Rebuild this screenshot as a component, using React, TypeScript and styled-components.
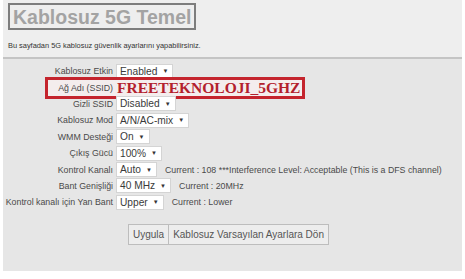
import React from "react";
import styled, { createGlobalStyle } from "styled-components";

const GlobalStyle = createGlobalStyle`
  html, body {
    margin: 0;
    padding: 0;
    background: #ffffff;
  }
  body {
    font-family: "Liberation Sans", Arial, sans-serif;
  }
`;

const Panel = styled.div`
  width: 459px;
  height: 271px;
  margin-left: 3px;
  background: #e6e6e6;
  display: flex;
  flex-direction: column;
`;

const Header = styled.div`
  background: #eeeeee;
  padding: 3px 0 0 5px;
  height: 59px;
  box-sizing: border-box;
  border-bottom: 2px solid #c4c4c4;
`;

const Title = styled.h1`
  display: inline-block;
  margin: 0;
  padding: 0 3px;
  height: 27px;
  line-height: 25px;
  box-sizing: border-box;
  border: 2px solid #7d7d7d;
  font-size: 19.5px;
  font-weight: bold;
  color: #a3a3a3;
`;

const Description = styled.p`
  margin: 11px 0 0;
  font-size: 7.4px;
  color: #333;
`;

const Form = styled.div`
  padding-top: 4px;
  display: flex;
  flex-direction: column;
`;

const Row = styled.div`
  position: relative;
  display: flex;
  align-items: center;
  height: 16.4px;
`;

const Label = styled.div`
  width: 113px;
  flex-shrink: 0;
  display: flex;
  justify-content: flex-end;
  white-space: nowrap;
  font-size: 8.8px;
  color: #4a4a4a;
  padding-right: 3px;
  box-sizing: border-box;
`;

const Select = styled.span`
  display: inline-flex;
  align-items: center;
  gap: 5px;
  height: 13px;
  padding: 0 4px 0 3px;
  background: #ffffff;
  border: 1px solid #d4d4d4;
  font-size: 10.2px;
  color: #3a3a3a;
  white-space: nowrap;
`;

const Arrow = styled.span`
  font-size: 6px;
  color: #333;
`;

const Current = styled.span`
  margin-left: 8px;
  font-size: 8.8px;
  color: #4a4a4a;
  white-space: nowrap;
`;

const Ssid = styled.span`
  font-family: "Liberation Serif", "Times New Roman", serif;
  font-weight: bold;
  font-size: 15.5px;
  color: #b3202c;
  position: relative;
  z-index: 1;
  padding-left: 1px;
`;

const Highlight = styled.div`
  position: absolute;
  left: 42px;
  top: -2px;
  width: 260px;
  height: 22px;
  border: 3px solid #c4242d;
  background: #f4eded;
  box-sizing: border-box;
`;

const HighlightLabel = styled(Label)`
  position: relative;
  z-index: 1;
`;

const Actions = styled.div`
  display: flex;
  margin: 13px 0 0 125px;
`;

const Button = styled.button`
  height: 21px;
  padding: 0 4px;
  background: #ededed;
  border: 1px solid #bdbdbd;
  font-family: "Liberation Sans", Arial, sans-serif;
  font-size: 10px;
  color: #555;
  & + & {
    border-left: none;
  }
`;

type Field = {
  label: string;
  value: string;
  current?: string;
};

const fields: Field[] = [
  { label: "Kablosuz Etkin", value: "Enabled" },
  { label: "Ağ Adı (SSID)", value: "" },
  { label: "Gizli SSID", value: "Disabled" },
  { label: "Kablosuz Mod", value: "A/N/AC-mix" },
  { label: "WMM Desteği", value: "On" },
  { label: "Çıkış Gücü", value: "100%" },
  {
    label: "Kontrol Kanalı",
    value: "Auto",
    current:
      "Current :  108 ***Interference Level: Acceptable (This is a DFS channel)",
  },
  { label: "Bant Genişliği", value: "40 MHz", current: "Current :   20MHz" },
  {
    label: "Kontrol kanalı için Yan Bant",
    value: "Upper",
    current: "Current : Lower",
  },
];

const App: React.FC = () => {
  return (
    <>
      <GlobalStyle />
      <Panel>
        <Header>
          <Title>Kablosuz 5G Temel</Title>
          <Description>
            Bu sayfadan 5G kablosuz güvenlik ayarlarını yapabilirsiniz.
          </Description>
        </Header>
        <Form>
          {fields.map((f) =>
            f.value === "" ? (
              <Row key={f.label}>
                <Highlight />
                <HighlightLabel>{f.label}</HighlightLabel>
                <Ssid>FREETEKNOLOJI_5GHZ</Ssid>
              </Row>
            ) : (
              <Row key={f.label}>
                <Label>{f.label}</Label>
                <Select>
                  {f.value}
                  <Arrow>▼</Arrow>
                </Select>
                {f.current && <Current>{f.current}</Current>}
              </Row>
            )
          )}
        </Form>
        <Actions>
          <Button>Uygula</Button>
          <Button>Kablosuz Varsayılan Ayarlara Dön</Button>
        </Actions>
      </Panel>
    </>
  );
};

export default App;
